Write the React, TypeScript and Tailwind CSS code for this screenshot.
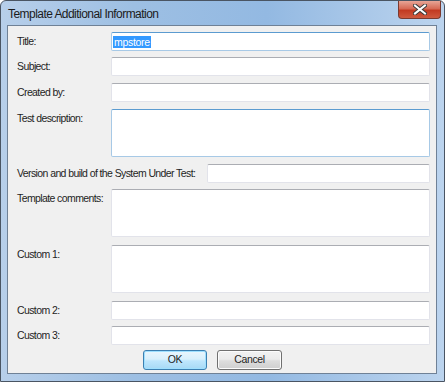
const font = "font-['Liberation_Sans',Arial,sans-serif]";
const labelCls = "shrink-0 whitespace-nowrap pt-[3px] text-[10.5px] leading-[13px] tracking-[-0.6px] text-[#1e1e1e]";

function Field({ h = 19, focus = false, children }: { h?: number; focus?: boolean; children?: React.ReactNode }) {
  return (
    <div
      className={`flex-1 rounded-[2px] border bg-white ${
        focus
          ? "border-[#a7c9e6] border-t-[#5b9bd0]"
          : "border-[#e2e3ea] border-t-[#abadb3]"
      }`}
      style={{ height: h }}
    >
      {children}
    </div>
  );
}

function Row({ label, h, mt, focus, children }: { label: string; h?: number; mt: number; focus?: boolean; children?: React.ReactNode }) {
  return (
    <div className="flex" style={{ marginTop: mt }}>
      <div className={`w-[94px] ${labelCls}`}>{label}</div>
      <Field h={h} focus={focus}>
        {children}
      </Field>
    </div>
  );
}

export default function App() {
  return (
    <div className={`${font} flex h-[382px] w-[445px] flex-col rounded-t-[6px] border border-[#4a5563] bg-[linear-gradient(90deg,#b7cfea_0%,#9dbfe3_30%,#93b9e2_60%,#bcd4ee_100%)]`}>
      {/* Title bar */}
      <div className="relative flex h-[24px] shrink-0 items-center pl-[7px] pt-[1px]">
        <span className="text-[12px] tracking-[-0.55px] text-[#1b1b1b]">Template Additional Information</span>
        <div className="absolute right-[3px] top-0 flex h-[18px] w-[43px] items-center justify-center rounded-b-[4px] border border-t-0 border-[#7a3a30] bg-[linear-gradient(180deg,#e8a596_0%,#d66a55_45%,#c23a22_55%,#cf5a3f_100%)]">
          <svg width="14" height="11" viewBox="0 0 14 11">
            <path d="M2 1.5 L12 9.5 M12 1.5 L2 9.5" stroke="#3a3a3a" strokeWidth="4" strokeLinecap="square" />
            <path d="M2 1.5 L12 9.5 M12 1.5 L2 9.5" stroke="#ffffff" strokeWidth="2" strokeLinecap="square" />
          </svg>
        </div>
      </div>

      {/* Client area */}
      <div className="mb-[7px] ml-[6px] mr-[7px] flex min-h-0 flex-1 flex-col border border-[#6f8196] bg-[#f0f0f0] pl-[9px] pr-[6px] pt-[6px]">
        <Row label="Title:" mt={0} focus>
          <div className="flex pl-[1px] pt-[3px]">
            <span className="h-[12px] bg-[#3399ff] px-[1px] text-[10.5px] leading-[12px] tracking-[-0.3px] text-white">mpstore</span>
          </div>
        </Row>
        <Row label="Subject:" mt={6} />
        <Row label="Created by:" mt={7} />
        <Row label="Test description:" mt={7} h={48} focus />
        <div className="mt-[7px] flex">
          <div className={`w-[190px] ${labelCls}`}>Version and build of the System Under Test:</div>
          <Field />
        </div>
        <Row label="Template comments:" mt={6} h={48} />
        <Row label="Custom 1:" mt={8} h={48} />
        <Row label="Custom 2:" mt={8} />
        <Row label="Custom 3:" mt={6} />

        <div className="ml-[126px] mt-[5px] flex gap-[10px] text-[10.5px] tracking-[-0.4px] text-[#1e1e1e]">
          <button className="flex h-[20px] w-[64px] items-center justify-center rounded-[3px] border border-[#3c7fb1] bg-[linear-gradient(180deg,#eaf6fd_0%,#d9f0fc_45%,#bee6fd_55%,#a7d9f5_100%)] shadow-[inset_0_0_0_1px_#9fe0ff]">
            OK
          </button>
          <button className="flex h-[20px] w-[65px] items-center justify-center rounded-[3px] border border-[#707070] bg-[linear-gradient(180deg,#f2f2f2_0%,#ebebeb_45%,#dddddd_55%,#cfcfcf_100%)] shadow-[inset_0_0_0_1px_#fcfcfc]">
            Cancel
          </button>
        </div>
      </div>
    </div>
  );
}
